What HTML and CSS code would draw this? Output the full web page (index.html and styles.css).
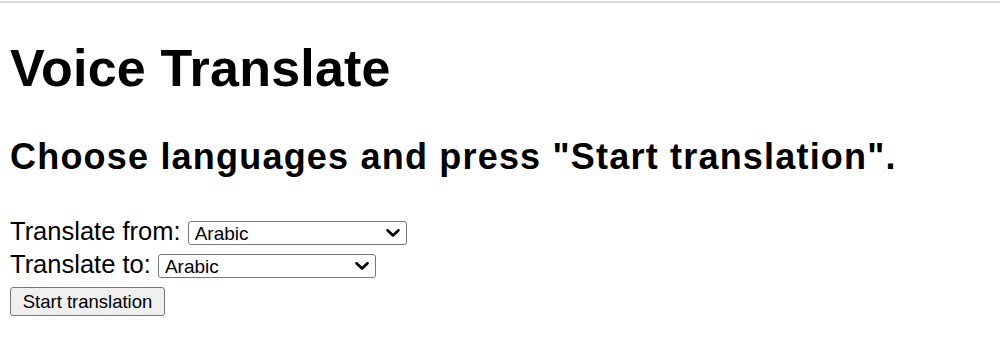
FILE: index.html
```html
<!DOCTYPE html>
<html lang="en">
<head>
<meta charset="utf-8">
<title>Voice Translate</title>
<link rel="stylesheet" href="styles.css">
</head>
<body>
<div class="top-rule"></div>
<main class="page">
  <h1 class="title">Voice Translate</h1>
  <h2 class="subtitle">Choose languages and press "Start translation".</h2>
  <div class="row">
    <label for="from">Translate from:</label>
    <select id="from" class="lang lang-from">
      <option>Arabic</option>
      <option>English</option>
      <option>French</option>
    </select>
  </div>
  <div class="row">
    <label for="to">Translate to:</label>
    <select id="to" class="lang lang-to">
      <option>Arabic</option>
      <option>English</option>
      <option>French</option>
    </select>
  </div>
  <div class="row">
    <button class="start" type="button">Start translation</button>
  </div>
</main>
</body>
</html>
```

FILE: styles.css
```css
html, body {
  margin: 0;
  padding: 0;
  background: #ffffff;
}

body {
  font-family: "Liberation Sans", Arial, sans-serif;
  color: #000000;
}

.top-rule {
  height: 2px;
  margin-top: 1px;
  background: #dcdcdc;
}

.page {
  padding: 0 10px;
}

.title {
  font-size: 52px;
  font-weight: bold;
  line-height: 60px;
  letter-spacing: 0.2px;
  margin: 35px 0 38px;
}

.subtitle {
  font-size: 36px;
  font-weight: bold;
  line-height: 42px;
  letter-spacing: 1.2px;
  margin: 0 0 37px;
}

.row {
  font-size: 25.5px;
  line-height: 33px;
}

.lang {
  -webkit-appearance: none;
  appearance: none;
  vertical-align: middle;
  height: 24px;
  font-family: "Liberation Sans", Arial, sans-serif;
  font-size: 19px;
  color: #000;
  padding: 0 26px 0 6px;
  border: 1px solid #767676;
  border-radius: 3px;
  background-color: #fff;
  background-image: url("data:image/svg+xml;utf8,<svg xmlns='http://www.w3.org/2000/svg' width='14' height='8' viewBox='0 0 14 8'><path d='M1.5 1.2 L7 6.5 L12.5 1.2' fill='none' stroke='black' stroke-width='2.6' stroke-linecap='round' stroke-linejoin='round'/></svg>");
  background-repeat: no-repeat;
  background-position: right 6px center;
  background-size: 14px 8px;
  box-sizing: border-box;
}

.lang-from {
  width: 219px;
}

.lang-to {
  width: 218px;
}

.start {
  font-family: "Liberation Sans", Arial, sans-serif;
  font-size: 18.5px;
  color: #000;
  height: 29px;
  width: 155px;
  padding: 0;
  margin-top: 6px;
  background: #efefef;
  border: 1px solid #767676;
  border-radius: 3px;
  vertical-align: top;
}
```
